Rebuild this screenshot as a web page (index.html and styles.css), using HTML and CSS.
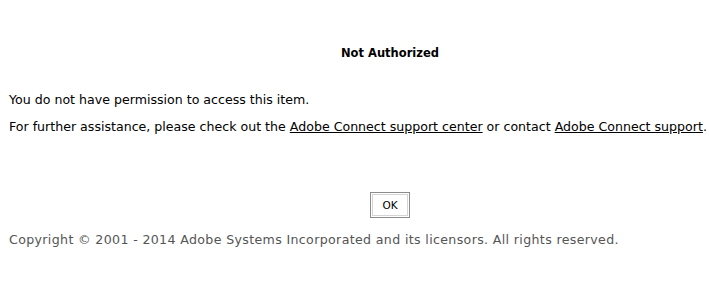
FILE: index.html
```html
<!DOCTYPE html>
<html lang="en">
<head>
  <meta charset="UTF-8">
  <title>Not Authorized</title>
  <link rel="stylesheet" href="styles.css">
</head>
<body>
  <div class="wrapper">
    <h1 class="title">Not Authorized</h1>
    <div class="message">
      <p>You do not have permission to access this item.</p>
      <p>For further assistance, please check out the <a href="#">Adobe Connect support center</a> or contact <a href="#">Adobe Connect support</a>.</p>
    </div>
    <div class="actions">
      <button class="btn-ok">OK</button>
    </div>
    <p class="copyright">Copyright &copy; 2001 - 2014 Adobe Systems Incorporated and its licensors. All rights reserved.</p>
  </div>
</body>
</html>
```

FILE: styles.css
```css
/* Base styles */
* {
  margin: 0;
  padding: 0;
  box-sizing: border-box;
}

body {
  font-family: "DejaVu Sans", Verdana, sans-serif;
  font-size: 12.6px;
  color: #000;
  background: #fff;
}

.wrapper {
  padding: 0 0 0 9px;
}

.title {
  font-size: 11.5px;
  font-weight: bold;
  text-align: center;
  padding-top: 46px;
  padding-left: 62px;
  line-height: 15px;
}

/* Message */
.message {
  margin-top: 31px;
  white-space: nowrap;
}

.message p {
  line-height: 15px;
  margin-bottom: 12px;
}

.message a {
  color: #000;
  text-decoration: underline;
}

/* Button */
.actions {
  text-align: center;
  padding-left: 62px;
  margin-top: 58px;
}

.btn-ok {
  font-family: "DejaVu Sans", Verdana, sans-serif;
  font-size: 10.5px;
  width: 40px;
  height: 26px;
  background: #fff;
  border: 1px solid #8c8c8c;
  box-shadow: inset 0 0 0 1px #fff, inset 0 0 0 2px #d4d4d4;
  cursor: pointer;
}

/* Footer */
.copyright {
  color: #555;
  margin-top: 14px;
  line-height: 15px;
  letter-spacing: 0.35px;
  white-space: nowrap;
}
```
